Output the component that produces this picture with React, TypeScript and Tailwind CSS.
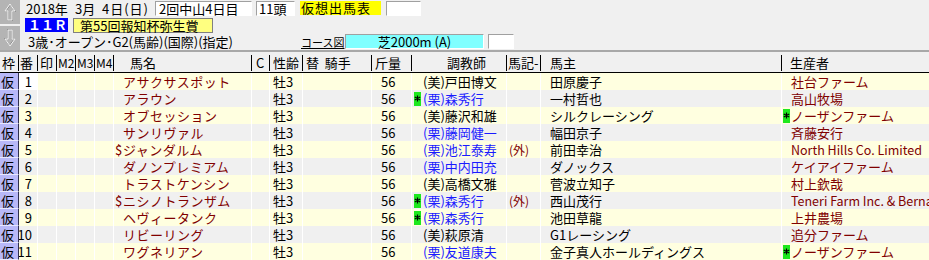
import React from 'react';

type Entry = {
  no: number;
  name: string;
  dollar?: boolean;
  ritto: boolean;
  trainer: string;
  tStar?: boolean;
  gai?: boolean;
  owner: string;
  breeder: string;
  bStar?: boolean;
};

const entries: Entry[] = [
  { no: 1, name: 'アサクサスポット', ritto: false, trainer: '戸田博文', owner: '田原慶子', breeder: '社台ファーム' },
  { no: 2, name: 'アラウン', ritto: true, trainer: '森秀行', tStar: true, owner: '一村哲也', breeder: '高山牧場' },
  { no: 3, name: 'オブセッション', ritto: false, trainer: '藤沢和雄', owner: 'シルクレーシング', breeder: 'ノーザンファーム', bStar: true },
  { no: 4, name: 'サンリヴァル', ritto: true, trainer: '藤岡健一', owner: '幅田京子', breeder: '斉藤安行' },
  { no: 5, name: 'ジャンダルム', dollar: true, ritto: true, trainer: '池江泰寿', gai: true, owner: '前田幸治', breeder: 'North Hills Co. Limited' },
  { no: 6, name: 'ダノンプレミアム', ritto: true, trainer: '中内田充', owner: 'ダノックス', breeder: 'ケイアイファーム' },
  { no: 7, name: 'トラストケンシン', ritto: false, trainer: '高橋文雅', owner: '菅波立知子', breeder: '村上欽哉' },
  { no: 8, name: 'ニシノトランザム', dollar: true, ritto: true, trainer: '森秀行', tStar: true, gai: true, owner: '西山茂行', breeder: 'Teneri Farm Inc. & Bernard' },
  { no: 9, name: 'ヘヴィータンク', ritto: true, trainer: '森秀行', tStar: true, owner: '池田草龍', breeder: '上井農場' },
  { no: 10, name: 'リビーリング', ritto: false, trainer: '萩原清', owner: 'G1レーシング', breeder: '追分ファーム' },
  { no: 11, name: 'ワグネリアン', ritto: true, trainer: '友道康夫', owner: '金子真人ホールディングス', breeder: 'ノーザンファーム', bStar: true },
];

const GRID =
  'grid grid-cols-[19px_19px_19px_19px_19px_19px_138px_18px_33px_69px_40px_95px_34px_241px_1fr]';

function ArrowButton({ down }: { down?: boolean }) {
  return (
    <div className="h-[24px] w-[20px] bg-[#b4b4b4] flex items-center justify-center">
      <svg width="20" height="24" viewBox="0 0 20 24" className={down ? 'rotate-180' : ''}>
        <path d="M10.5 4.5 L5.5 11.5 H8.5 V20.5 H12.5 V11.5 H15.5 Z" fill="none" stroke="#8a8a8a" strokeWidth="1" />
        <path d="M10 4 L5 11 H8 V20 H12 V11 H15 Z" fill="none" stroke="#f2f2f2" strokeWidth="1" />
      </svg>
    </div>
  );
}

// green marker box with a black asterisk
function Star() {
  return (
    <span className="flex h-[14px] w-[7px] items-center justify-center bg-[#1ee81e]">
      <svg width="7" height="7" viewBox="0 0 7 7">
        <path d="M3.5 0.5 V6.5 M0.8 2 L6.2 5 M0.8 5 L6.2 2" stroke="#000" strokeWidth="1.2" />
      </svg>
    </span>
  );
}

function HeadCell({ children, className = '', line = true }: { children?: React.ReactNode; className?: string; line?: boolean }) {
  return (
    <div className={`flex h-[19px] items-center whitespace-nowrap overflow-hidden ${className}`}>
      <div className="flex-1 overflow-hidden">{children}</div>
      {line && <span className="h-[16px] w-px shrink-0 bg-black" />}
    </div>
  );
}

function Cell({ children, className = '' }: { children?: React.ReactNode; className?: string }) {
  return (
    <div className={`flex h-[17px] items-center overflow-hidden whitespace-nowrap border-r border-white ${className}`}>
      {children}
    </div>
  );
}

const sunken = 'border border-[#a0a0a0] border-b-white border-r-white';

export default function App() {
  return (
    <div className="h-[260px] w-[929px] overflow-hidden bg-[#f0f0f0] font-['Noto_Sans_CJK_JP',sans-serif] text-[13px] leading-[17px] text-black">
      {/* header panel */}
      <div className="flex h-[50px]">
        <div className="flex w-[20px] flex-col gap-[2px]">
          <ArrowButton />
          <ArrowButton down />
        </div>
        <div className="flex flex-col pl-[5px]">
          <div className="flex h-[17px] items-start pt-[1px] leading-[15px]">
            <span className="w-[50px] pl-[1px]">2018年</span>
            <span className="w-[27px]">3月</span>
            <span className="w-[53px] tracking-[1px]">4日(日)</span>
            <span className={`h-[15px] w-[97px] ${sunken} bg-white pl-[3px] leading-[13px]`}>2回中山4日目</span>
            <span className={`ml-[4px] h-[15px] w-[39px] ${sunken} bg-white pl-[2px] leading-[13px]`}>11頭</span>
            <span className="ml-[5px] h-[14px] w-[81px] whitespace-nowrap bg-[#ffff00] pl-[1px] leading-[14px] tracking-[1px]">
              仮想出馬表
            </span>
            <span className={`ml-[5px] h-[15px] w-[35px] ${sunken} bg-white`} />
          </div>
          <div className="flex h-[16px] items-center">
            <span className="h-[14px] w-[43px] bg-[#0000ff] pl-[3px] text-[13px] font-bold leading-[14px] text-white">
              １１Ｒ
            </span>
            <span className="ml-[5px] h-[15px] w-[140px] border border-[#808080] bg-[#ffff80] pl-[6px] leading-[13px]">
              第55回報知杯弥生賞
            </span>
          </div>
          <div className="flex h-[17px] items-center">
            <span className="w-[276px] pl-[3px] leading-[15px]">3歳･オープン･G2(馬齢)(国際)(指定)</span>
            <span className="w-[44px] whitespace-nowrap text-[11px] leading-[14px] underline">コース図</span>
            <span className={`h-[15px] w-[139px] ${sunken} bg-[#80ffff] text-center leading-[13px]`}>芝2000m (A)</span>
            <span className={`ml-[4px] h-[15px] w-[26px] ${sunken} bg-white`} />
          </div>
        </div>
      </div>

      <div className="h-[3px] border-t-2 border-[#a8a8a8]" />

      {/* column headers */}
      <div className={`${GRID} border-b border-black`}>
        <HeadCell className="pl-[2px]">枠</HeadCell>
        <HeadCell className="pl-[1px]">番</HeadCell>
        <HeadCell className="pl-[2px]">印</HeadCell>
        <HeadCell className="pl-[1px] text-[12px]">M2</HeadCell>
        <HeadCell className="pl-[1px] text-[12px]">M3</HeadCell>
        <HeadCell className="pl-[1px] text-[12px]">M4</HeadCell>
        <HeadCell className="pl-[16px]">馬名</HeadCell>
        <HeadCell className="pl-[4px]">C</HeadCell>
        <HeadCell className="pl-[3px]">性齢</HeadCell>
        <HeadCell className="pl-[3px]">替&nbsp;&nbsp;騎手</HeadCell>
        <HeadCell className="pl-[3px]">斤量</HeadCell>
        <HeadCell className="pl-[35px]">調教師</HeadCell>
        <HeadCell className="pl-[1px]">馬記-</HeadCell>
        <HeadCell className="pl-[9px]">馬主</HeadCell>
        <HeadCell className="pl-[8px]" line={false}>生産者</HeadCell>
      </div>

      {/* entries */}
      {entries.map((e, i) => (
        <div key={e.no} className={`${GRID} ${i % 2 === 0 ? 'bg-[#ffffe0]' : 'bg-[#f0f0f0]'}`}>
          <div className="flex h-[17px] items-center border-r border-b border-r-[#303050] border-b-[#e8e8ff] bg-[#b8b8f8] pl-[1px]">
            仮
          </div>
          <Cell
            className={`justify-end pr-[5px] ${
              e.no === 1 ? 'border border-dotted border-[#c00000] bg-white' : ''
            }`}
          >
            {e.no}
          </Cell>
          <Cell />
          <Cell />
          <Cell />
          <Cell />
          <Cell className="pl-[9px] tracking-[0.5px] text-[#800000]">
            {e.dollar && <span className="-ml-[8px] inline-block w-[8px]">$</span>}
            {e.name}
          </Cell>
          <Cell />
          <Cell className="pl-[3px]">牡3</Cell>
          <Cell />
          <Cell className="pl-[9px]">56</Cell>
          <Cell className={`pl-[2px] ${e.ritto ? 'text-[#1a1aff]' : ''}`}>
            <span className="mr-[2px] inline-flex w-[7px] shrink-0">{e.tStar && <Star />}</span>
            {e.ritto ? '(栗)' : '(美)'}
            {e.trainer}
          </Cell>
          <Cell className="pl-[2px] text-[12px] text-[#800000]">{e.gai ? '(外)' : ''}</Cell>
          <Cell className="pl-[9px]">{e.owner}</Cell>
          <div className="flex h-[17px] items-center overflow-hidden whitespace-nowrap pl-[1px] text-[#800000]">
            <span className="mr-[1px] inline-flex w-[7px] shrink-0">{e.bStar && <Star />}</span>
            <span className={/^[A-Za-z]/.test(e.breeder) ? 'text-[12.5px]' : ''}>{e.breeder}</span>
          </div>
        </div>
      ))}
    </div>
  );
}
